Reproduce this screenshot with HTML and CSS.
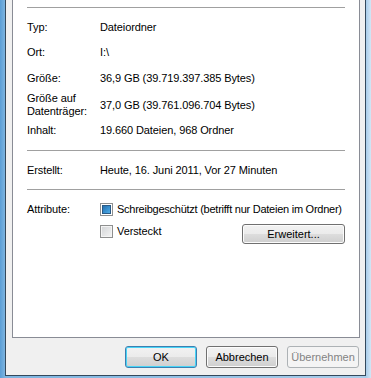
FILE: index.html
```html
<!DOCTYPE html>
<html lang="de">
<head>
    <meta charset="UTF-8">
    <title>Eigenschaften</title>
    <link rel="stylesheet" href="styles.css">
</head>
<body>
    <div class="dialog">
        <div class="panel">
            <div class="sep sep-top"></div>

            <div class="row r-typ"><span class="label">Typ:</span><span>Dateiordner</span></div>
            <div class="row r-ort"><span class="label">Ort:</span><span>I:\</span></div>
            <div class="row r-size"><span class="label">Größe:</span><span>36,9 GB (39.719.397.385 Bytes)</span></div>
            <div class="row r-disk"><span class="label">Größe auf<br>Datenträger:</span><span>37,0 GB (39.761.096.704 Bytes)</span></div>
            <div class="row r-content"><span class="label">Inhalt:</span><span>19.660 Dateien, 968 Ordner</span></div>

            <div class="sep sep-mid"></div>

            <div class="row r-created"><span class="label">Erstellt:</span><span>Heute, 16. Juni 2011, Vor 27 Minuten</span></div>

            <div class="sep sep-attr"></div>

            <div class="row r-attr">
                <span class="label">Attribute:</span>
                <label class="check check-long"><span class="box box-mixed"></span>Schreibgeschützt (betrifft nur Dateien im Ordner)</label>
            </div>
            <div class="row r-hidden">
                <span class="label"></span>
                <label class="check"><span class="box"></span>Versteckt</label>
                <button class="btn btn-adv">Erweitert...</button>
            </div>
        </div>

        <div class="actions">
            <button class="btn btn-default">OK</button>
            <button class="btn">Abbrechen</button>
            <button class="btn" disabled>Übernehmen</button>
        </div>
    </div>
</body>
</html>
```

FILE: styles.css
```css
*{
    margin: 0;
    padding: 0;
    box-sizing: border-box;
}
/*Fensterrahmen (Aero)*/
body{
    width: 371px;
    height: 378px;
    overflow: hidden;
    background: linear-gradient(90deg, #5b9ed6 0, #7cb4e0 5px, #a9cdea 366px, #d3e6f5 371px);
    font-family: "Liberation Sans", Arial, sans-serif;
    font-size: 11px;
    line-height: 13px;
    letter-spacing: -0.1px;
    color: #000;
}
.dialog{
    margin-left: 5px;
    width: 361px;
    height: 376px;
    background-color: #f0f0f0;
    border: 1px solid #34495c;
    border-top: none;
    padding: 0 5px 0 6px;
    display: flex;
    flex-direction: column;
}
/*Registerkarte*/
.panel{
    height: 338px;
    background-color: #fff;
    border: 1px solid #898c95;
    border-top: none;
    padding: 0 14px;
}
.sep{
    height: 1px;
    background-color: #a0a0a0;
}
.sep-top{ margin-top: 7px; }
.sep-mid{ margin-top: 13px; }
.sep-attr{ margin-top: 12px; }

.row{
    display: flex;
    align-items: flex-start;
    white-space: nowrap;
}
.label{
    width: 73px;
    flex-shrink: 0;
}
.r-typ{ margin-top: 13px; }
.r-ort{ margin-top: 12px; }
.r-size{ margin-top: 13px; }
.r-disk{ margin-top: 7px; align-items: center; }
.r-content{ margin-top: 6px; }
.r-created{ margin-top: 13px; }
.r-attr{ margin-top: 13px; }
.r-hidden{ margin-top: 9px; }

/*Kontrollkästchen*/
.check{
    display: flex;
    align-items: center;
    gap: 4px;
}
.check-long{
    letter-spacing: -0.25px;
}
.box{
    width: 13px;
    height: 13px;
    flex-shrink: 0;
    border: 1px solid #8e8f8f;
    background: linear-gradient(135deg, #d2d4d6, #f4f4f4);
    box-shadow: inset 0 0 0 1px #f4f4f4;
}
.box-mixed{
    border-color: #8e8f8f;
    background: linear-gradient(135deg, #1d5f9c, #3d97d6 60%, #68c0ef);
    box-shadow: inset 0 0 0 1px #fff, inset 0 0 0 2px #2a5a85;
}

/*Schaltflächen*/
.btn{
    font-family: "Liberation Sans", Arial, sans-serif;
    font-size: 11px;
    color: #000;
    height: 22px;
    width: 72px;
    border: 1px solid #707070;
    border-radius: 3px;
    background: linear-gradient(#f2f2f2 0, #ebebeb 50%, #dddddd 50%, #cfcfcf 100%);
    box-shadow: inset 0 0 0 1px #fcfcfc;
    outline: none;
}
.btn-default{
    border-color: #3c7fb1;
    box-shadow: inset 0 0 0 1px #48d4f6;
}
.btn:disabled{
    color: #838383;
    border-color: #adb2b5;
    background: #f4f4f4;
    box-shadow: none;
}
.btn-adv{
    margin-left: auto;
    margin-top: -1px;
    width: 103px;
    height: 20px;
}
.actions{
    display: flex;
    justify-content: flex-end;
    gap: 9px;
    margin-top: 8px;
    padding-right: 1px;
}
```
